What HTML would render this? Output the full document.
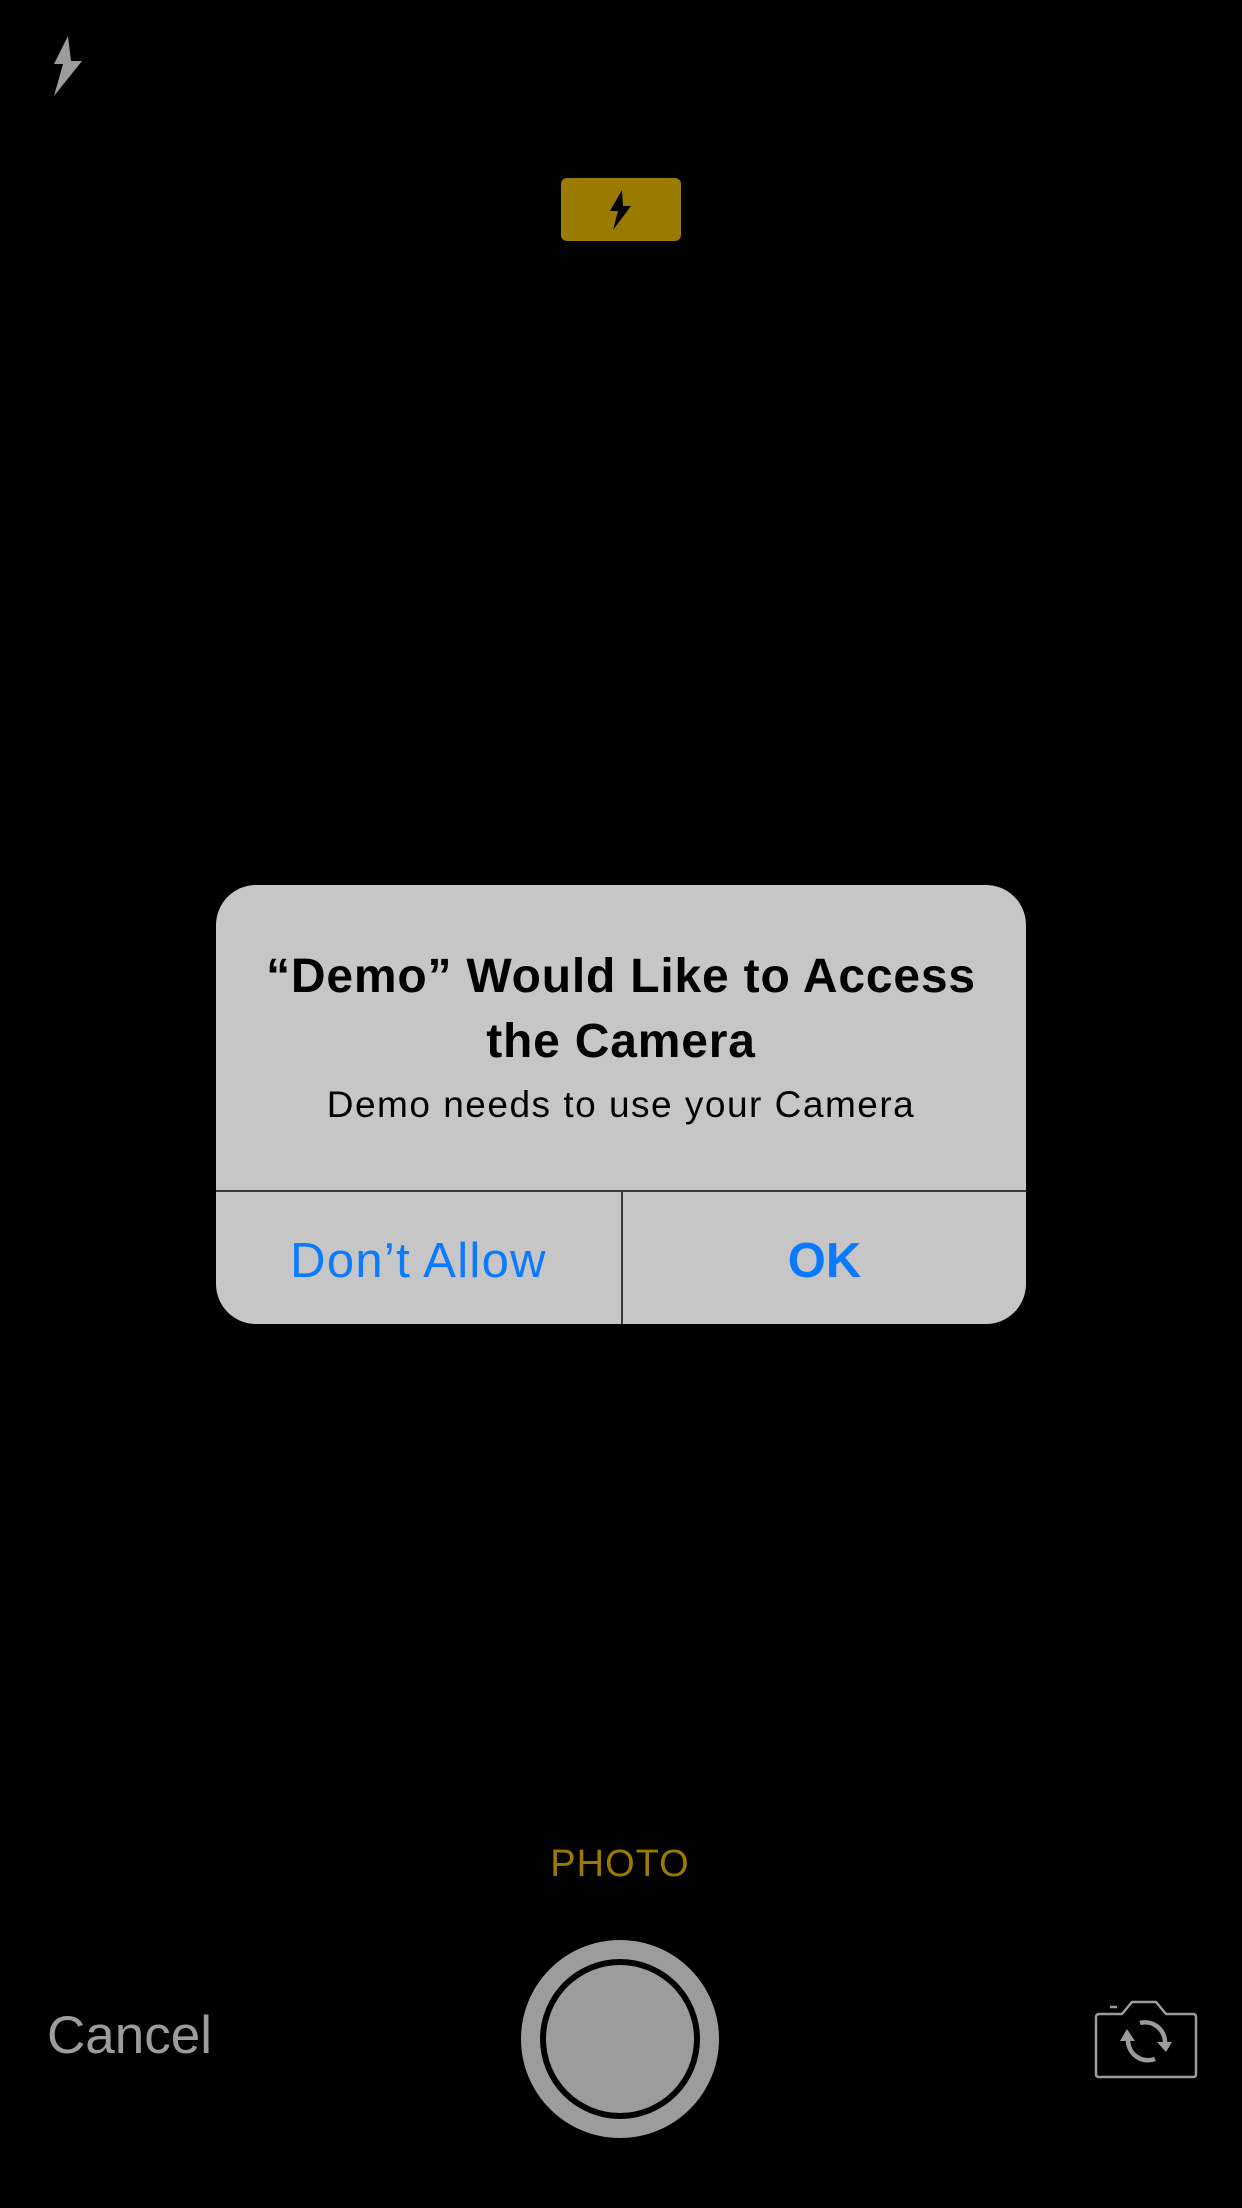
<!DOCTYPE html>
<html><head><meta charset="utf-8"><style>
html,body{margin:0;padding:0;background:#000;width:1242px;height:2208px;overflow:hidden;font-family:"Liberation Sans",sans-serif}
.abs{position:absolute}
.dlg{left:216px;top:885px;width:810px;height:439px;background:#c6c6c6;border-radius:40px;overflow:hidden}
.t{left:0;width:810px;text-align:center;color:#000}
</style></head><body>
<svg class="abs" style="left:48px;top:34px" width="40" height="64" viewBox="0 0 40 64">
<path d="M20 2 L6 30 L15 30 L6 62 L34 27 L23 27 Z" fill="#9c9c9c"/></svg>
<div class="abs" style="left:561px;top:178px;width:120px;height:63px;background:#9a7b00;border-radius:6px"></div>
<svg class="abs" style="left:606px;top:189px" width="30" height="42" viewBox="0 0 30 42">
<path d="M16 1 L4 22 L12 22 L7 41 L25 17 L17 17 Z" fill="#000"/></svg>

<div class="abs dlg">
<div class="abs t" style="top:59px;font-size:48px;font-weight:bold;line-height:65px;letter-spacing:0.8px">“Demo” Would Like to Access<br>the Camera</div>
<div class="abs t" style="top:197px;font-size:37px;line-height:46px;letter-spacing:1.5px">Demo needs to use your Camera</div>
<div class="abs" style="left:0;top:305px;width:810px;height:2px;background:#3a3a3a"></div>
<div class="abs" style="left:405px;top:306px;width:2px;height:140px;background:#3a3a3a"></div>
<div class="abs" style="left:0;top:346px;width:405px;text-align:center;color:#0a7aff;font-size:49px;line-height:60px;letter-spacing:1.3px">Don’t Allow</div>
<div class="abs" style="left:407px;top:346px;width:403px;text-align:center;color:#0a7aff;font-size:49px;font-weight:bold;line-height:60px">OK</div>
</div>

<div class="abs" style="left:500px;top:1842px;width:240px;text-align:center;color:#9a7b00;font-size:38px;letter-spacing:1px;line-height:44px">PHOTO</div>
<div class="abs" style="left:47px;top:2006px;color:#9c9c9c;font-size:53px;line-height:60px">Cancel</div>
<svg class="abs" style="left:520px;top:1939px" width="200" height="200" viewBox="0 0 200 200">
<circle cx="100" cy="100" r="99" fill="#9c9c9c"/>
<circle cx="100" cy="100" r="80" fill="#000"/>
<circle cx="100" cy="100" r="74" fill="#9c9c9c"/>
</svg>
<svg class="abs" style="left:1080px;top:1990px" width="130" height="100" viewBox="0 0 130 100" fill="none" stroke="#9c9c9c" stroke-width="2.5">
<path d="M20 24 H42 L52 12 H76 L86 24 H113 Q116 24 116 27 V84 Q116 87 113 87 H19 Q16 87 16 84 V27 Q16 24 20 24 Z"/>
<path d="M30 17 H37"/>
<path d="M48 50 A20 20 0 0 0 75 69" stroke-width="4.5"/>
<path d="M60 33 A20 20 0 0 1 85 52" stroke-width="4.5"/>
<path d="M40 51 L47 39 L55 51 Z" fill="#9c9c9c" stroke="none"/>
<path d="M77 52 L92 52 L86 62 Z" fill="#9c9c9c" stroke="none"/>
</svg>
</body></html>
